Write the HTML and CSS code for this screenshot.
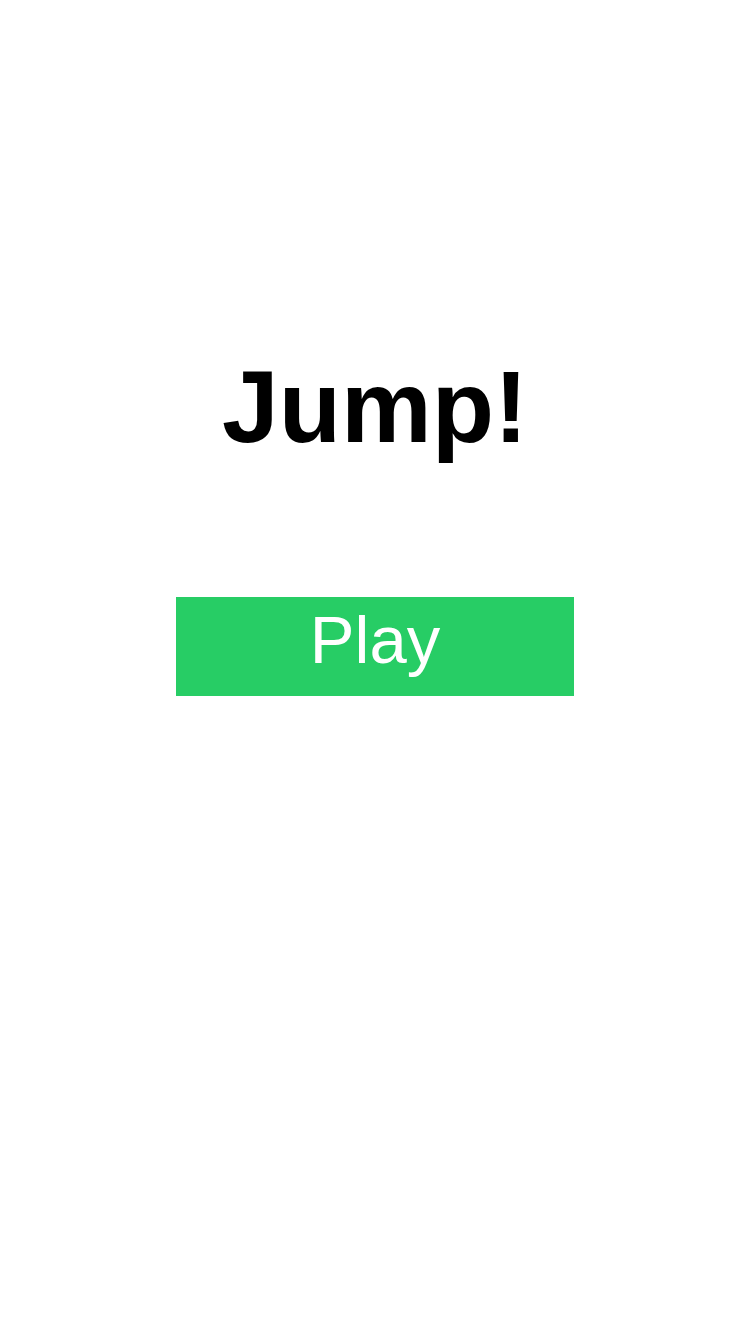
FILE: index.html
```html
<!DOCTYPE html>
<html>
<head>
<meta charset="utf-8">
<link rel="stylesheet" href="styles.css">
<title>Jump!</title>
</head>
<body>
<main class="screen">
  <h1 class="title">Jump!</h1>
  <button class="play">Play</button>
</main>
</body>
</html>
```
FILE: styles.css
```css
html, body {
  margin: 0;
  padding: 0;
  background: #ffffff;
}
.screen {
  width: 750px;
  height: 1334px;
  display: flex;
  flex-direction: column;
  align-items: center;
  font-family: "Liberation Sans", Arial, sans-serif;
}
.title {
  margin: 350px 0 0 0;
  font-size: 102px;
  font-weight: bold;
  line-height: 114px;
  height: 114px;
  color: #000000;
}
.play {
  margin-top: 133px;
  width: 398px;
  height: 99px;
  padding: 5px 0 19px 0;
  border: none;
  border-radius: 0;
  background: #27cd65;
  color: #ffffff;
  font-family: "Liberation Sans", Arial, sans-serif;
  font-size: 67px;
  line-height: 75px;
  box-sizing: border-box;
}
```
